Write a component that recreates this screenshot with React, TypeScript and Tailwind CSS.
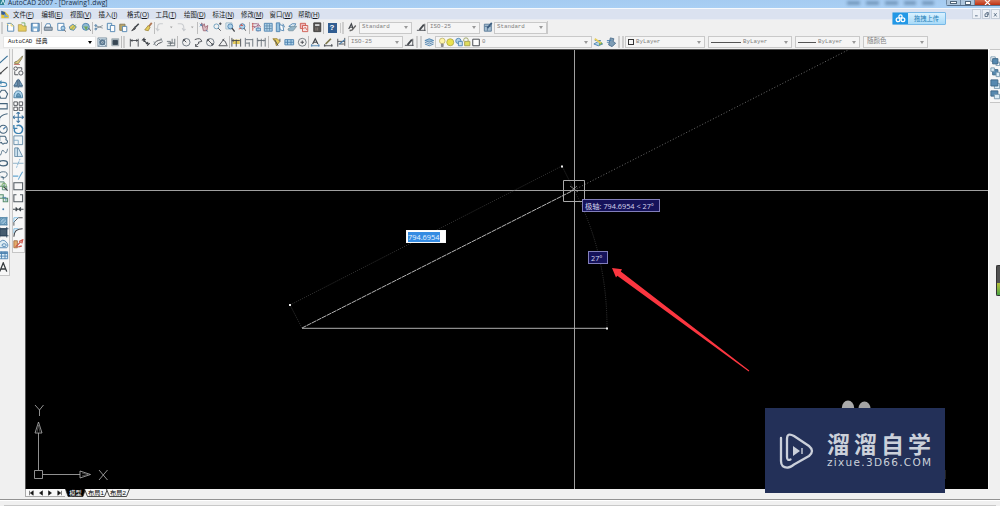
import React from "react";

const K = "#30343a";
const B = "#3975a8";
const L = "#a9cfe8";
const G = "#62a04b";
const Y = "#e6c94c";
const R = "#c9473a";

const glyphs: Record<string, React.ReactNode> = {
  page: <><path d="M3 1.5h4l3 3v6H3z" fill="#fff" stroke={B} /><path d="M2 2l2 2M7 1.5v3h3" stroke={Y} /></>,
  open: <><path d="M1.5 3h4l1 1.5h4v6h-9z" fill={Y} stroke="#a58a36" strokeWidth=".8" /><path d="M5 1h4v4" stroke={G} /></>,
  save: <><path d="M1.5 1.5h9v9h-9z" fill="#75a9d0" stroke="#34679a" /><path d="M3.5 2h5v3h-5zM4 7.5h4v3H4z" fill="#fff" stroke="none" /></>,
  print: <><path d="M2 6l2-4h4l1 4z" fill="#fff" stroke={B} /><path d="M1.5 6h9v3.5h-9z" fill="#9cacbc" stroke="#566878" /></>,
  preview: <><path d="M2 1.5h7v8H2z" fill="#fff" stroke={B} /><circle cx="8" cy="7" r="2.3" fill={L} stroke={B} /><path d="M9.5 9l1.5 2" stroke={K} /></>,
  publish: <><path d="M1.5 5.5l4-3 4 3-3 4-4-1z" fill={Y} stroke={B} /><path d="M3 9l6-6" stroke={G} /></>,
  globe: <><circle cx="5.5" cy="5.5" r="4" fill="#88b6ce" stroke={B} /><path d="M2 5h6l-2 5-2-4z" fill={G} stroke="none" /><path d="M9 7l2 3" stroke={K} /></>,
  cut: <><path d="M1 4l9 3M1 8l9-4" stroke="#77838c" /><circle cx="2" cy="4" r="1" stroke={B} /><circle cx="2" cy="8" r="1" stroke={B} /></>,
  copy: <><path d="M1.5 1.5h5v7h-5z" fill="#e8f5fb" stroke={B} /><path d="M5 4h5v7H5z" fill="#fff" stroke={B} /></>,
  paste: <><path d="M2 2.5h6v7H2z" fill="#b9a15b" stroke="#796b45" /><path d="M5 5h5v6H5z" fill="#fff" stroke={B} /></>,
  brush: <><path d="M10 2L6 6" stroke={K} strokeWidth="1.8" /><path d="M6 5L2 10l4-2z" fill="#4c4845" stroke={K} /></>,
  yellowbrush: <><path d="M10 1L6 6" stroke="#a86842" strokeWidth="2" /><path d="M6 4L2 9l4 1 2-4z" fill={Y} stroke="#9a8132" /></>,
  undo: <path d="M9 2H6Q3 2 3 6v3M1 7l2 3 2-2" stroke="#c5c8cc" strokeWidth="1.2" />,
  redo: <path d="M2 2h3q4 0 4 5v2M7 7l2 3 2-2" stroke="#c5c8cc" strokeWidth="1.2" />,
  dot: <path d="M4.5 5h3L6 7z" fill="#999" stroke="none" />,
  pan: <><path d="M3 1l1 4 2-3 1 4 3-2-1 6H5z" fill="#d9b7bd" stroke="#985969" /><path d="M1 2l3 3m0-3L1 5M8 9l2 2" stroke={B} /></>,
  zoomrt: <><circle cx="5" cy="5" r="2.8" stroke="#5690b5" /><path d="M7 7l3 3M8 2h3M9.5.5v3" stroke={K} /></>,
  zoomwin: <><path d="M1 1h7v7H1z" fill="#deedf5" stroke="#95b3c5" /><circle cx="6" cy="5" r="2.8" fill={L} stroke={B} /><path d="M8 7l3 4" stroke={K} strokeWidth="1.5" /></>,
  zoomprev: <><circle cx="6" cy="5" r="3" fill={L} stroke={B} /><path d="M8 7l2 3" stroke={K} /><path d="M7 4H4l2-2M2 8l3-1" stroke={R} /></>,
  props: <><path d="M1 2h6M1 5h4M8 1v10M3 7l6-4 2 3" stroke="#945378" /><path d="M2 1v9" stroke={R} /><path d="M6 7h5v3H6z" fill={L} stroke={B} /></>,
  grid: <><path d="M1.5 1.5h9v9h-9z" fill={L} stroke={B} /><path d="M2 4.5h8M2 7.5h8M4.5 2v8M7.5 2v8" stroke="#477a9d" strokeWidth=".8" /></>,
  palette: <><path d="M1.5 1h4v10h-4z" fill="#8ebede" stroke={B} /><path d="M5 3l4 1 1 6-4-1zM9 2l2 4" fill="#fff" stroke={B} /></>,
  sheet: <><path d="M2 5l4-3h4l-2 4z" fill="#deeff7" stroke={B} /><path d="M1 8l5-3h5l-4 5H2z" fill="#8aafc4" stroke="#72909e" /></>,
  markup: <><path d="M1.5 1.5h6v6h-6z" fill="#edb3b6" stroke={R} /><path d="M4 4h6v7H4z" fill="#f7dfe0" stroke={R} /><path d="M5 8l2-2 2 3" stroke={R} /></>,
  calc: <><path d="M2 1h8v10H2z" fill="#474442" stroke="#282726" /><path d="M3.5 2.5h5v2h-5z" fill="#ddd" stroke="none" /><path d="M4 7h4M4 9h4" stroke="#b49e91" strokeDasharray="1 1" /></>,
  textstyle: <><path d="M2 8L5 2l2 6M3 6h4" stroke={K} strokeWidth="1.4" /><path d="M10 4L6 9l-3 1" stroke="#555" strokeWidth="1.6" /></>,
  dimstyle: <><path d="M1 9.5h10M10 2v8" stroke={K} /><path d="M9 3L4 9" stroke={K} strokeWidth="2" /></>,
  tablestyle: <><path d="M1.5 2.5h8v8h-8z" fill="#a1bcd0" stroke="#44688a" /><path d="M2 5h7M5 5v5" stroke="#44688a" /><path d="M10 1L5 7" stroke="#284d73" strokeWidth="1.8" /></>,
  gear: <><path d="M1 1h10v10H1z" fill="#cde0ec" stroke="#778b9b" /><circle cx="6" cy="6" r="2.5" stroke="#486986" strokeWidth="2" /><path d="M2 2l8 8M10 2l-8 8" stroke="#607789" /></>,
  workspace: <><path d="M2 2h8v8H2z" fill="#93a4ae" stroke="#9aa5ac" /><path d="M3.5 4h5v4.500h-5z" fill="#243443" stroke="#243443" /></>,
  linear: <path d="M1.5 2v9M10.5 2v9M2 4h8M2 4l2-1M2 4l2 1M10 4L8 3m2 1L8 5" stroke={K} />,
  aligned: <path d="M1 4l3-3M7 10l3-3M2.5 3l6 6M3 3l.5 2.5M3 3h2.5M8 8l-2.5-.5M8 8l-.5-2.5" stroke={K} strokeWidth="1.2" />,
  arcdim: <><path d="M1 9q1-5 9-6M4 10q1-3 6-4" stroke={K} /><path d="M1 5l2 5M9 1l2 5" stroke="#818b93" /></>,
  ordinate: <path d="M1 10h9V2M1 5h4v5M7 2v5H2M4 7h6" stroke="#59636a" />,
  radius: <><circle cx="6" cy="6" r="4.3" stroke="#596570" /><path d="M6 6L3 3m0 2V3h2" stroke={K} /></>,
  jog: <path d="M2 3q7-3 8 2M10 5l-4 1 1 1-4 3M3 8v3h3" stroke={K} />,
  diameter: <><circle cx="6" cy="6" r="4.3" stroke="#596570" /><path d="M3 3l6 6M3 5V3h2M9 7v2H7" stroke={K} /></>,
  angular: <path d="M11 10H1l6-8M5 3q4 1 5 6" stroke={K} />,
  quick: <><path d="M2 3h8v5H2z" fill={Y} stroke="none" /><path d="M1 1v10M6 3v8M11 2v9M2 4h8M3 3L1 4l2 1" stroke={K} /></>,
  baseline: <path d="M1.5 1v10M6 6v5M10 2v9M2 3h8M2 7h4" stroke="#555f68" />,
  continue: <path d="M1.5 1v10M6 2v9M10.5 1v10M2 4h8M3 3L2 4l1 1M9 3l1 1-1 1" stroke="#555f68" />,
  leader: <><path d="M1 2h5l3 3-4 5-1-4z" fill={Y} stroke="#92761f" /><path d="M3 3l4 7M9 2v3" stroke={K} /></>,
  tolerance: <><path d="M1 3h10v6H1z" fill={L} stroke={B} /><path d="M4 3v6M8 3v6M1 6h10" stroke={B} /></>,
  center: <><circle cx="6" cy="6" r="4.5" stroke="#59636a" /><path d="M4 6h4M6 4v4" stroke={K} /></>,
  dimedit: <><path d="M1 10h10M2 8v3M10 8v3" stroke={B} /><path d="M3 8l3-6 3 6M4 6h4" stroke={K} strokeWidth="1.4" /></>,
  dimtext: <><path d="M1 10h10M2 8v3M10 8v3" stroke={K} /><path d="M3 8l6-6" stroke="#716a3a" strokeWidth="2" /></>,
  update: <><path d="M2 2v9M10 1v9M2 5h8M3 8h6" stroke={K} /><path d="M4 8l6-5" stroke={B} strokeWidth="1.3" /></>,
  layers: <><path d="M1 4l5-2 5 2-5 2z" fill="#91b6d1" stroke={B} /><path d="M1 6l5 2 5-2M1 8l5 2 5-2" stroke={B} /></>,
  bulb: <><circle cx="6" cy="4.5" r="3.2" fill="#fff4a2" stroke="#bdb163" /><path d="M5 8h2v3H5z" fill="#888" stroke="#777" /></>,
  sun: <circle cx="6" cy="6" r="4" fill="#e9e13e" stroke="#aba43b" />,
  freeze: <><circle cx="5" cy="4.500" r="3" fill={L} stroke={B} /><path d="M5 5h4.500v5H5z" fill="#c9e0ee" stroke={B} /></>,
  lock: <><path d="M2 5V3q0-2 2.500-2t2.500 2v2" stroke="#899443" /><path d="M3 5h6v5H3z" fill="#ddda4c" stroke="#99963d" /></>,
  swatch: <path d="M2 2.500h7.500V10H2z" fill="#fff" stroke={K} strokeWidth="1.1" />,
  layerprev: <><path d="M1 8l5-3 5 3-5 2zM2 4h7" fill={L} stroke={B} /><path d="M7 4l4 3-4 3z" fill={G} stroke="none" /><path d="M2 2l7 5" stroke={Y} strokeWidth="2" /></>,
  layerstate: <><path d="M5 1l4 1-1 3 3 2-4 4-4-2z" fill="#7193ae" stroke="#3a5f80" /><path d="M1 4h5M1 6h3" stroke={B} /></>,
  line: <path d="M1 10L11 1" stroke="#24638e" strokeWidth="1.4" />,
  xline: <><path d="M1 10L11 1" stroke="#343536" strokeWidth="1.3" /><circle cx="3" cy="8.5" r="1" fill={K} /></>,
  pline: <path d="M2 9q7 2 8-1 0-3-4-3H2M4 3L2 5l2 2" stroke="#327aa8" strokeWidth="1.2" />,
  polygon: <path d="M4 1.5h4l3 4-2 5H3L1 5.5z" stroke="#31536e" strokeWidth="1.2" />,
  rect: <path d="M1.5 3h9v6h-9z" stroke="#31536e" strokeWidth="1.2" />,
  arc: <><path d="M1 10Q2 3 11 2" stroke="#31536e" strokeWidth="1.2" /><circle cx="1.5" cy="9" r="1" fill={B} stroke="none" /></>,
  circle: <><circle cx="6" cy="6" r="4.5" stroke="#31536e" strokeWidth="1.2" /><path d="M6 6l3-3" stroke={B} strokeWidth="1.4" /></>,
  cloud: <path d="M2 1.500h6q2 2 1 4 3 1 1 4H7q-2 2-3-1-3 1-2-2z" stroke="#31536e" strokeWidth="1.2" />,
  spline: <path d="M1 9c4 3 2-9 6-4 3 4 3 0 4-3" stroke="#31536e" />,
  ellipse: <ellipse cx="6" cy="6" rx="4.8" ry="3" stroke="#31536e" strokeWidth="1.6" />,
  ellipsearc: <path d="M2 7Q0 2 6 2q6 0 4 5-2 3-6 1M3 8h3v3" stroke="#31536e" />,
  insert: <><path d="M1 1h6v5H1zM5 6h5v4H5z" fill="#e5f0e2" stroke="#3e7363" /><circle cx="7" cy="5" r="2.5" stroke={G} /><path d="M7 7l4 4" stroke={K} strokeWidth="1.4" /></>,
  block: <><path d="M1 2h5v4H1zM6 6h5v4H6z" fill="#deeedd" stroke="#478262" strokeWidth="1.2" /><path d="M5 5h4v4" stroke={B} /></>,
  point: <circle cx="6" cy="6" r="1.1" fill={B} stroke="none" />,
  hatch: <><path d="M2 2h8v8H2z" fill="#8ab5d1" stroke="#265c7e" /><path d="M2 6l4-4M2 10l8-8M6 10l4-4M1 2h10M2 1v10M1 10h10M10 1v10" stroke="#4d86ab" /></>,
  gradient: <><path d="M2 2h8v8H2z" fill="#334c61" stroke="#132f47" /><path d="M0 2h12M2 0v12M0 10h12M10 0v12" stroke="#132f47" /></>,
  region: <><path d="M1 10V5Q5-1 9 3q4 4 1 7z" fill="#dcecf4" stroke={B} /><ellipse cx="7" cy="7" rx="2.4" ry="1.6" stroke={B} /></>,
  table: <><path d="M1 2h10v8H1z" fill="#d9ebf7" stroke={B} /><path d="M1 3.500h10" stroke={B} strokeWidth="2" /><path d="M1 7h10M4 2v8M8 2v8" stroke={B} /></>,
  mtext: <path d="M2 11L6 1l4 10M3.3 8h5.4" stroke="#202629" strokeWidth="1.5" />,
  erase: <><path d="M11 1L5 7l-3 1v2h4l4-6z" fill="#dbc36e" stroke="#746c42" /><path d="M1 11h7" stroke="#ba5149" /></>,
  copyobj: <><circle cx="3" cy="3" r="2" stroke={K} /><circle cx="9" cy="8" r="2.4" stroke={K} /><path d="M5 2h5v3M2 6v4h4" stroke={K} /></>,
  mirror: <><path d="M5 2L1 9h4zM7 2l4 7H7z" fill="#6d9abb" stroke="#264e72" /><path d="M6 1v10M1 10h10" stroke="#264e72" /></>,
  offset: <><path d="M1 10q0-8 5-8t5 8z" fill="#a8d2ec" stroke="#306b94" /><path d="M4 9q0-4 2-4t3 4z" fill="#6097bb" stroke="#306b94" /></>,
  array: <path d="M1 1h4v4H1zM7 1h4v4H7zM1 7h4v4H1zM7 7h4v4H7z" fill="#fff" stroke={K} />,
  move: <path d="M6 .5v11M.5 6h11M4 2l2-2 2 2M4 10l2 2 2-2M2 4L0 6l2 2M10 4l2 2-2 2" stroke="#286597" strokeWidth="1.2" />,
  rotate: <path d="M4 2Q9 0 11 5q0 6-5 6-6-1-4-6M1 1v4h4" stroke="#2875aa" strokeWidth="1.6" />,
  scale: <><path d="M1 1h10v10H1z" fill="#f0f5f8" stroke="#4b7897" /><path d="M1 6h5v5" stroke="#72a1c0" /></>,
  stretch: <><path d="M2 1h4l5 10H2z" fill="#d4e8f4" stroke="#4b7897" /><path d="M5 1v10" stroke="#4b7897" /></>,
  trim: <><path d="M0 6h12" stroke="#77a3bd" /><path d="M8 1L4 11" stroke="#63a1cb" strokeDasharray="2 1" /></>,
  extend: <path d="M0 7h6M8 7l3-5M6 11l2-4" stroke="#559dcc" strokeWidth="1.2" />,
  breakat: <path d="M1 2h10v8H1z" stroke="#3d454d" strokeWidth="1.2" />,
  break: <path d="M4 2H1v8h10V2H8" stroke="#3d454d" strokeWidth="1.2" />,
  join: <path d="M0 6h12M3 4l2 2-2 2M9 4L7 6l2 2" stroke="#2a333a" strokeWidth="1.4" />,
  chamfer: <><path d="M1 11V7l5-5h5" stroke={K} /><path d="M1 7V2h5" stroke="#65b0df" /></>,
  fillet: <><path d="M1 11Q1 2 11 2" stroke={K} strokeWidth="1.2" /><path d="M1 7V2h5" stroke="#65b0df" /></>,
  explode: <><path d="M1 2h4v8H1z" fill="#e5a45b" stroke="#985f30" /><path d="M3 9l6-6M6 9l4-1M7 3l4-2-1 4" stroke={R} strokeWidth="1.6" /></>,
  order1: <><path d="M1 1h5v5H1zM7 7h4v4H7z" fill="#fff" stroke="#6589a4" /><path d="M3 3h6v6H3z" fill="#457ea9" stroke="#245378" /></>,
  order2: <><path d="M3 3h6v6H3z" fill="#457ea9" stroke="#245378" /><path d="M1 1h4v4H1zM7 6h4v5H7z" fill="#d9edf7" stroke="#6589a4" /></>,
  order3: <><path d="M5 5h6v6H5z" fill="#d9edf7" stroke="#6589a4" /><path d="M1 1h8v7H1z" fill="#457ea9" stroke="#245378" /></>,
  order4: <><path d="M1 1h8v6H1z" fill="#457ea9" stroke="#245378" /><path d="M5 5h6v5H5z" fill="#d9edf7" stroke="#6589a4" /></>,
};

function Icon({ n }: { n: string }) {
  return (
    <svg viewBox="0 0 12 12" fill="none" className="size-[10.5px] shrink-0 opacity-90">
      {glyphs[n]}
    </svg>
  );
}

function Group({ icons, className }: { icons: string; className: string }) {
  return (
    <div className={`flex h-[12px] shrink-0 items-center justify-around border-r border-[#bdbdbd] ${className}`}>
      {icons.split(" ").map((n, i) => <Icon key={i} n={n} />)}
    </div>
  );
}

function Combo({ children, className, arrow = "text-[#999]" }: { children: React.ReactNode; className: string; arrow?: string }) {
  return (
    <div className={`flex h-[12px] shrink-0 items-center justify-between border border-[#c9c9c9] bg-[#f5f5f5] pl-[2px] pr-[3px] ${className}`}>
      <span className="flex items-center gap-[2px] whitespace-nowrap">{children}</span>
      <svg viewBox="0 0 4 3" className={`h-[3px] w-[4px] ${arrow}`}><path d="M0 0h4L2 3z" fill="currentColor" /></svg>
    </div>
  );
}

function Grip() {
  return <div className="mx-px h-[12px] w-[2px] shrink-0 border-x border-[#cecece]" />;
}

const menus = ["文件(F)", "编辑(E)", "视图(V)", "插入(I)", "格式(O)", "工具(T)", "绘图(D)", "标注(N)", "修改(M)", "窗口(W)", "帮助(H)"];
const draw = "line xline pline polygon rect arc circle cloud spline ellipse ellipsearc insert block point hatch gradient region table mtext".split(" ");
const modify = "erase copyobj mirror offset array move rotate scale stretch trim extend breakat break join chamfer fillet explode".split(" ");

function ToolColumn({ icons, className }: { icons: string[]; className: string }) {
  return (
    <div className={`flex shrink-0 flex-col items-center border-b border-r border-[#c6c6c6] pt-[5px] ${className}`}>
      {icons.map((n) => <div key={n} className="flex h-[11.5px] shrink-0 items-center"><Icon n={n} /></div>)}
    </div>
  );
}

function Header() {
  return (
    <header className="relative shrink-0">
      <div className="flex h-[8px] items-start bg-gradient-to-b from-[#a5cbf1] to-[#a9cff4]">
        <svg viewBox="0 0 6 6" className="h-[6px] w-[6px] shrink-0"><path d="M0 0h5v5H0z" fill="#2f8294" /><path d="M1 4l2-4 2 5" stroke="#d3eff1" fill="none" /></svg>
        <span className="ml-[2px] whitespace-nowrap font-['Open_Sans','Noto_Sans',sans-serif] text-[6.7px] leading-[6px] text-[#172e46]">AutoCAD 2007 - [Drawing1.dwg]</span>
        <div className="ml-auto mr-[66px] flex gap-[6px] pt-px blur-[1.5px]">
          {["w-[13px]", "w-[13px]", "w-[13px]", "w-[12px]", "w-[12px]"].map((w, i) => <i key={i} className={`h-[4px] bg-[#56799f]/60 ${w}`} />)}
        </div>
      </div>
      <div className="flex h-[12px] items-center border-b border-t-[1.5px] border-b-[#e9ecf3] border-t-[#f7f9fc] bg-[#dbe2f0]">
        <svg viewBox="0 0 12 12" className="h-[9px] w-[10px] shrink-0"><path d="M1 2h5l5 5v4H1z" fill="#e5c53b" /><path d="M1 1l5 2 1 4-6-1z" fill="#335c9a" /><path d="M5 5l6 4-6 1z" fill="#7ea8c9" /></svg>
        <nav className="ml-[3px] flex font-['Liberation_Sans','Noto_Sans_CJK_SC',sans-serif] text-[6.4px] leading-[9px] text-[#171b22]">
          {menus.map((m) => (
            <span key={m} className="w-[28.5px] whitespace-nowrap">{m.slice(0, 3)}<u className="underline decoration-[0.5px]">{m[3]}</u>)</span>
          ))}
        </nav>
      </div>
      <div className="flex h-[15px] items-center bg-[#f0f0f0] font-['Liberation_Mono','Noto_Sans_CJK_SC',monospace] text-[5.8px] text-[#808080]">
        <Grip />
        <Group icons="page open save" className="w-[38px]" />
        <Group icons="print preview publish globe" className="w-[51px]" />
        <Group icons="cut copy paste brush yellowbrush" className="w-[62px]" />
        <Group icons="undo dot redo dot" className="w-[43px]" />
        <Group icons="pan zoomrt zoomwin zoomprev" className="w-[52px]" />
        <Group icons="props grid palette sheet markup calc" className="w-[74px]" />
        <div className="flex w-[17px] shrink-0 justify-center border-r border-[#c9c9c9]"><b className="flex h-[10px] w-[9px] items-center justify-center bg-[#315d91] font-['Liberation_Sans',sans-serif] text-[8px] leading-none text-white">?</b></div>
        <Grip />
        <div className="flex w-[14px] shrink-0 justify-center"><Icon n="textstyle" /></div>
        <Combo className="w-[53px]">Standard</Combo>
        <div className="ml-[3px] flex w-[12px] shrink-0 justify-center"><Icon n="dimstyle" /></div>
        <Combo className="w-[53px]">ISO-25</Combo>
        <div className="ml-[2px] flex w-[12px] shrink-0 justify-center"><Icon n="tablestyle" /></div>
        <Combo className="w-[53px]">Standard</Combo>
        <div className="h-[13px] w-px bg-[#c9c9c9]" />
      </div>
      <div className="flex h-[14px] items-center bg-[#f0f0f0] pl-[3px] font-['Liberation_Mono','Noto_Sans_CJK_SC',monospace] text-[5.8px] text-[#808080]">
        <Combo className="w-[93px] border-[#e5e5e5] bg-white text-[#222]" arrow="text-black"><span className="pl-[2px]">AutoCAD 经典</span></Combo>
        <Group icons="gear workspace" className="w-[26px]" />
        <Grip />
        <Group icons="linear aligned arcdim ordinate" className="ml-[2px] w-[50px]" />
        <Group icons="radius jog diameter angular" className="ml-[2px] w-[50px]" />
        <Group icons="quick baseline continue" className="w-[39px]" />
        <Group icons="leader tolerance center" className="ml-[2px] w-[38px]" />
        <div className="flex w-[39px] shrink-0 justify-around"><Icon n="dimedit" /><Icon n="dimtext" /><Icon n="update" /></div>
        <Combo className="w-[55px]">ISO-25</Combo>
        <div className="flex w-[12px] shrink-0 justify-center"><Icon n="dimstyle" /></div>
        <Grip /><Grip />
        <div className="flex w-[12px] shrink-0 justify-center"><Icon n="layers" /></div>
        <Combo className="w-[157px]">
          <span className="flex w-[42px] justify-between">{"bulb sun freeze lock swatch".split(" ").map((n) => <span key={n} className="flex w-[8px] justify-center"><Icon n={n} /></span>)}</span>
          <span>0</span>
        </Combo>
        <div className="flex w-[25px] shrink-0 justify-around"><Icon n="layerprev" /><Icon n="layerstate" /></div>
        <Grip /><Grip />
        <Combo className="w-[80px]"><i className="size-[6px] border border-[#333]" />ByLayer</Combo>
        <Combo className="ml-[3px] w-[84px]"><i className="h-px w-[30px] bg-[#555]" />ByLayer</Combo>
        <Combo className="ml-[3px] w-[65px]"><i className="h-px w-[18px] bg-[#555]" />ByLayer</Combo>
        <Combo className="ml-[3px] w-[65px]"><span className="pl-px text-[6.5px]">随颜色</span></Combo>
      </div>
      <div className="absolute right-0 top-0 flex h-[6px] w-[54px] overflow-hidden rounded-bl-[2px] border-b border-[#566e88]">
        <span className="flex w-[15px] items-center justify-center border-x border-[#6f89a4] bg-[#adc5dc]"><i className="h-[3px] w-[7px] border border-[#50667a] bg-white" /></span>
        <span className="flex w-[14px] items-center justify-center border-r border-[#6f89a4] bg-[#adc5dc]"><i className="h-[4px] w-[6px] border border-[#50667a] bg-white" /></span>
        <span className="flex w-[25px] items-center justify-center bg-gradient-to-b from-[#d46e50] to-[#bd2e0c]"><svg viewBox="0 0 7 5" className="h-[5px] w-[7px]"><path d="M1 0l5 5M6 0L1 5" stroke="#fff" strokeWidth="1.2" /></svg></span>
      </div>
      <div className="absolute right-0 top-[9px] flex h-[10px] w-[28px] gap-px">
        {["M3 7h4", "M3 4h4v4H3zM5 2h3v4", "M3 3l4 5M7 3L3 8"].map((d) => <span key={d} className="flex min-w-0 flex-1 items-center justify-center border border-[#c5ced9] bg-[#edf1f7]"><svg viewBox="0 0 10 10" className="size-[7px]" fill="none" stroke="#52677e" strokeWidth="1.3"><path d={d} /></svg></span>)}
      </div>
      <div className="absolute left-[892px] top-[12px] flex h-[13px] w-[54px] items-center overflow-hidden rounded-[1px] border border-[#78b9e7] bg-gradient-to-b from-[#d9f1ff] to-[#a8daf8]">
        <span className="flex h-full w-[15px] shrink-0 items-center justify-center bg-[#2398e6]"><svg viewBox="0 0 12 10" className="h-[9px] w-[11px]" fill="none" stroke="#fff" strokeWidth="1.4"><circle cx="6" cy="2.8" r="1.8" /><circle cx="3.3" cy="6.5" r="2.1" /><circle cx="8.7" cy="6.5" r="2.1" /></svg></span>
        <span className="flex-1 whitespace-nowrap text-center font-['Noto_Sans_CJK_SC',sans-serif] text-[6.3px] leading-[11px] text-[#237db7]">拖拽上传</span>
      </div>
    </header>
  );
}

function Drawing() {
  return (
    <main className="relative w-[963px] shrink-0 overflow-hidden border-l border-t border-[#555] bg-black font-['Open_Sans','Noto_Sans_CJK_SC',sans-serif]">
      <svg className="absolute -left-px -top-px h-[440px] w-[963px]" viewBox="25 49 963 440" fill="none">
        <path d="M25 190.5H988M574.5 49v440" stroke="#a0a0a0" />
        <path d="M574 190L848 50" stroke="#858585" strokeWidth=".8" strokeDasharray="1 2" />
        <path d="M302 328L574 190" stroke="#c6c6c6" strokeWidth=".9" strokeDasharray="5 .6" />
        <path d="M302 328.3H607" stroke="#b0b0b0" />
        <path d="M302 328L290 305L562 166l12 24M574 190Q607 252 607 328" stroke="#505050" strokeWidth=".65" strokeDasharray="1 1.2" />
        <path d="M289 304h2v2h-2zM561 165.500h2v2h-2zM606 327.500h2v2h-2z" fill="#eee" />
        <path d="M563.500 180.500h21v21h-21z" stroke="#aaa" />
        <path d="M570 186l8 6M577 186l-7 6" stroke="#aaa" strokeWidth=".7" />
        <path d="M612 268l10 1.200-1.200 2.300L749.300 370.600l-.6.8L617.300 275.800l-1.300 1.800z" fill="#fb3640" />
        <g stroke="#b5b5b5" strokeWidth=".8">
          <path d="M34.500 470.500h8v8h-8zM38.500 470v-37M43 474.500h37M35 433l3.500-11 3.500 11zM80 471l10.500 3.500L80 478zM35 405l4.500 5 4-5M39.500 410v6M99 470l8.500 10M107.500 470L99 480" />
        </g>
        <path d="M37 432l1.500-7 1.500 7M82 473l6 1.500-6 1.500" stroke="#777" strokeWidth=".6" />
        <ellipse cx="848" cy="408" rx="6.2" ry="7.5" fill="#aaa" /><ellipse cx="864.5" cy="409" rx="6.2" ry="7.5" fill="#a3a3a3" />
        <path d="M945 470v9" stroke="#444" />
      </svg>
      <div className="absolute left-[380px] top-[180px] flex h-[13px] w-[40px] items-center border border-[#f7f7f7] bg-white pl-px text-[7.4px] leading-[10px]"><span className="bg-[#348be2] text-[#e4f2ff]">794.6954</span></div>
      <div className="absolute left-[556px] top-[149px] flex h-[13px] w-[78px] items-center whitespace-nowrap border border-[#817eb9] bg-[#15125a] pl-[2px] text-[7.3px] leading-[10px] text-[#d5d4ec]">极轴: 794.6954 &lt; 27°</div>
      <div className="absolute left-[562px] top-[201px] flex h-[13px] w-[20px] items-center border border-[#817eb9] bg-[#15125a] pl-[2px] text-[7.3px] leading-[10px] text-[#d5d4ec]">27°</div>
    </main>
  );
}

function Watermark() {
  return (
    <div className="absolute left-[765px] top-[408px] flex h-[85px] w-[180px] items-center bg-[#233058] pl-[14px] text-[#cbd0da]">
      <svg viewBox="0 0 36 38" className="h-[38px] w-[36px] shrink-0" fill="none" stroke="currentColor" strokeLinecap="round" strokeLinejoin="round">
        <path d="M2 6v23q0 7 7 6.500 2 0 6-3L30 24q6-5 0-10L15 4Q8 0 8 7v18q0 4 3.500 2.500" strokeWidth="2.300" />
        <path d="M14 14v10l7-5z" fill="currentColor" stroke="none" /><path d="M23 16v6" strokeWidth="1.400" strokeLinecap="butt" />
      </svg>
      <div className="ml-[12px] flex flex-col">
        <span className="whitespace-nowrap font-['Noto_Sans_CJK_SC',sans-serif] text-[23px] font-bold leading-[32px] tracking-[4px]">溜溜自学</span>
        <span className="-mt-[3px] mb-[5px] whitespace-nowrap font-['DejaVu_Sans',sans-serif] text-[10.5px] leading-[13px] tracking-[1.3px]">zixue.3D66.COM</span>
      </div>
    </div>
  );
}

function LayoutTab({ children, active, className }: { children: string; active?: boolean; className: string }) {
  return (
    <span className={`relative -mr-[2px] flex h-[8px] shrink-0 items-center justify-center ${className}`}>
      <svg viewBox="0 0 24 8" preserveAspectRatio="none" className="absolute inset-0 h-full w-full"><path d="M.5 0L3.500 7.500h17L23.500 0" fill={active ? "#000" : "#f5f5f5"} stroke="#222" strokeWidth=".8" /></svg>
      <span className={`relative whitespace-nowrap leading-[8px] ${active ? "text-white" : "text-black"}`}>{children}</span>
    </span>
  );
}

export default function App() {
  return (
    <div className="relative flex h-[506px] w-[1000px] flex-col overflow-hidden bg-[#f0f0f0]">
      <Header />
      <div className="flex h-[440px] shrink-0">
        <aside className="flex w-[25px] shrink-0 items-start gap-[2px] bg-[#f0f0f0]">
          <ToolColumn icons={draw} className="h-[227px] w-[10px] bg-[#f7f7f7] pr-[2px]" />
          <ToolColumn icons={modify} className="h-[204px] w-[13px] border-l bg-[#f7f7f7]" />
        </aside>
        <Drawing />
        <aside className="flex w-[12px] shrink-0 flex-col items-end border-l border-white bg-[#f0f0f0]">
          <div className="flex h-[54px] w-[10px] flex-col items-center border-b border-t border-[#c6c6c6] bg-[#f7f7f7] pt-[5px]">
            {["order1", "order2", "order3", "order4"].map((n) => <div key={n} className="flex h-[11.5px] shrink-0 items-center"><Icon n={n} /></div>)}
          </div>
          <div className="mt-[162px] flex h-[31px] w-[4px] flex-col justify-end rounded-l-[2px] border border-r-0 border-[#333] bg-[#505050]"><i className="h-[12px] bg-gradient-to-b from-[#b4bf35] to-[#45a344]" /></div>
        </aside>
      </div>
      <div className="flex h-[11px] shrink-0 items-start border-b border-[#929292] bg-[#f0f0f0] pl-[25px] font-['Liberation_Sans','Noto_Sans_CJK_SC',sans-serif] text-[6.2px]">
        <div className="flex h-[8px] w-[40px] shrink-0 items-center justify-around border-b border-l border-[#aaa] bg-[#f8f8f8]">
          {["M2 1v6M7 1L3 4l4 3z", "M6 1L2 4l4 3z", "M2 1l4 3-4 3z", "M6 1v6M1 1l4 3-4 3z"].map((d) => <svg key={d} viewBox="0 0 8 8" className="size-[6px]" fill="#111" stroke="#111" strokeWidth=".7"><path d={d} /></svg>)}
        </div>
        <LayoutTab active className="w-[21px]">模型</LayoutTab><LayoutTab className="w-[24px]">布局1</LayoutTab><LayoutTab className="w-[24px]">布局2</LayoutTab>
      </div>
      <div className="h-[6px] shrink-0 border-t border-white pt-[4px]"><div className="ml-[4px] h-px w-[992px] bg-[#c8c8c8]" /></div>
      <Watermark />
    </div>
  );
}
